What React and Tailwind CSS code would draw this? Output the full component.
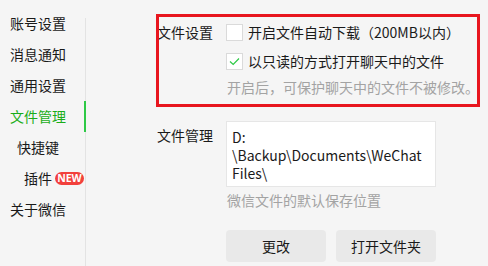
import React from "react";

const font = { fontFamily: '"Noto Sans CJK SC", "Noto Sans", sans-serif' };

function NavItem({ children, active, indent = "pl-[10px]" }) {
  return (
    <div className={`relative h-[31px] flex items-center whitespace-nowrap ${indent} text-[14px] ${active ? "text-[#1aad19]" : "text-[#1a1a1a]"}`}>
      {children}
      {active && <div className="absolute right-0 top-0 bottom-0 w-[2px] bg-[#2ec946]" />}
    </div>
  );
}

function Checkbox({ checked }) {
  return (
    <div className="w-[17px] h-[17px] border border-[#dadada] bg-white flex items-center justify-center shrink-0">
      {checked && (
        <svg width="13" height="13" viewBox="0 0 13 13" fill="none">
          <path d="M2 6.5 L5.2 9.5 L11 3.5" stroke="#2ec946" strokeWidth="1.2" />
        </svg>
      )}
    </div>
  );
}

export default function App() {
  return (
    <div className="w-[488px] h-[266px] bg-[#f5f5f5] flex overflow-hidden relative" style={font}>
      <div className="relative w-[86px] pt-[8px] shrink-0">
        <div className="absolute right-0 top-[18px] bottom-0 w-px bg-[#e3e3e3]" />
        <NavItem>账号设置</NavItem>
        <NavItem>消息通知</NavItem>
        <NavItem>通用设置</NavItem>
        <NavItem active>文件管理</NavItem>
        <NavItem indent="pl-[17px]">快捷键</NavItem>
        <NavItem indent="pl-[24px]">
          <span className="shrink-0">插件</span>
          <span className="ml-[3px] w-[29px] h-[13px] shrink-0 rounded-full bg-[#f2403c] text-white text-[10.5px] font-bold leading-[13px] flex items-center justify-center" style={{ fontFamily: '"Open Sans", sans-serif' }}>NEW</span>
        </NavItem>
        <NavItem>关于微信</NavItem>
      </div>

      <div className="flex-1 pl-[71px] pt-[22px] text-[14px] text-[#1a1a1a]">
        <div className="flex">
          <div className="w-[69px] shrink-0 leading-[20px]">文件设置</div>
          <div className="flex flex-col">
            <div className="h-[20px] flex items-center gap-[5px]">
              <Checkbox />
              <span>开启文件自动下载（200MB以内）</span>
            </div>
            <div className="h-[20px] mt-[9px] flex items-center gap-[5px]">
              <Checkbox checked />
              <span>以只读的方式打开聊天中的文件</span>
            </div>
            <div className="mt-[6px] leading-[20px] text-[#a3a3a3] pl-[1px]">开启后，可保护聊天中的文件不被修改。</div>
          </div>
        </div>

        <div className="flex mt-[24px]">
          <div className="w-[69px] shrink-0 leading-[20px] mt-[4px]">文件管理</div>
          <div className="flex flex-col">
            <div className="w-[210px] h-[66px] bg-white border border-[#e6e6e6] pl-[5px] pt-[6px] leading-[18px] text-[#1a1a1a]">
              D:<br />\Backup\Documents\WeChat<br />Files\
            </div>
            <div className="mt-[3px] leading-[20px] text-[#a3a3a3] pl-[1px]">微信文件的默认保存位置</div>
            <div className="mt-[20px] flex gap-[10px]">
              <button className="w-[100px] h-[32px] rounded-[4px] bg-[#e9e9e9] text-[#1a1a1a] text-[14px]">更改</button>
              <button className="w-[100px] h-[32px] rounded-[4px] bg-[#e9e9e9] text-[#1a1a1a] text-[14px]">打开文件夹</button>
            </div>
          </div>
        </div>
      </div>

      <div className="absolute left-[156px] top-[14px] w-[324px] h-[93px] border-[3px] border-[#e8161e] pointer-events-none" />
    </div>
  );
}
